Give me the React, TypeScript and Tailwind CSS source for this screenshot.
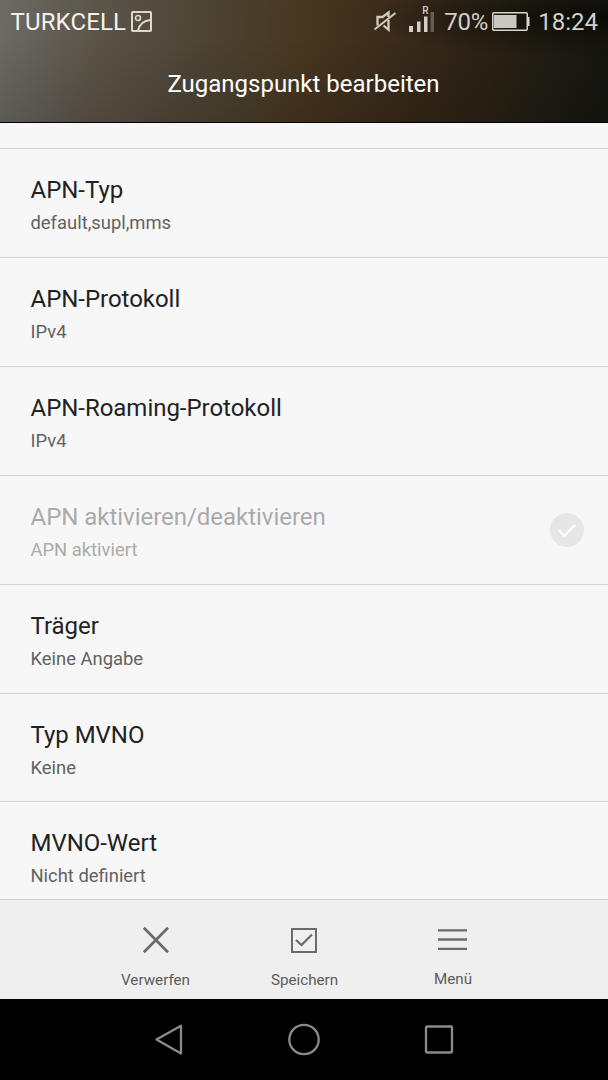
type Setting = { title: string; value: string; disabled?: boolean };

const settings: Setting[] = [
  { title: "APN-Typ", value: "default,supl,mms" },
  { title: "APN-Protokoll", value: "IPv4" },
  { title: "APN-Roaming-Protokoll", value: "IPv4" },
  { title: "APN aktivieren/deaktivieren", value: "APN aktiviert", disabled: true },
  { title: "Träger", value: "Keine Angabe" },
  { title: "Typ MVNO", value: "Keine" },
  { title: "MVNO-Wert", value: "Nicht definiert" },
];

function StatusBar() {
  return (
    <div className="flex h-[43px] items-center pl-[10.500px] pr-[10px] pt-[1px] text-[24px] leading-[43px] text-[#d2cfc9]">
      <span className="w-[115.500px] tracking-[0.150px] text-[#f4f2ee]">TURKCELL</span>
      <svg className="ml-[5px] -mt-[1px] h-[21px] w-[21px] shrink-0" viewBox="0 0 21 21" fill="none" stroke="#dcd9ce" strokeWidth="2">
        <rect x="1" y="1" width="19" height="19" rx="0.8" />
        <circle cx="7" cy="7" r="2.5" strokeWidth="1.7" />
        <path d="M7 19.5C8.5 13.5 13 9.500 19.500 9" />
      </svg>
      <svg className="ml-auto h-[24px] w-[24px] shrink-0" viewBox="0 0 24 24" fill="none" stroke="#d2cbc0" strokeWidth="2.300">
        <path d="M4.500 15.500V7H9.500L15.500 2.500V7M10.500 15.500L15.500 19.800V10" />
        <path d="M1.500 19.500L22.500 3" strokeWidth="2" />
      </svg>
      <div className="relative ml-[12px] h-[43px] w-[26px] shrink-0">
        <svg className="absolute left-0 top-0 h-[43px] w-[26px]" viewBox="0 0 26 43">
          <path d="M0 25h4v6H0zM8 20.500h3.500V31H8zM15 15.500h3.500V31H15z" fill="#d2cfc9" />
          <path d="M21.500 11H25v20h-3.500z" fill="#655d50" />
        </svg>
        <span className="absolute left-[13px] top-[4.500px] text-[10px] leading-[12px] font-medium">R</span>
      </div>
      <span className="ml-[9px] w-[44px] tracking-[-0.200px]">70%</span>
      <svg className="ml-[4px] -mt-[1px] h-[19px] w-[38px] shrink-0" viewBox="0 0 38 19">
        <rect x="0.750" y="0.750" width="34.500" height="17.500" rx="1" fill="none" stroke="#d8d5cf" strokeWidth="1.500" />
        <path d="M2 3h22.500v13H2z" fill="#cbc8c4" />
        <path d="M35.500 5H37.500v9h-2z" fill="#d8d5cf" />
      </svg>
      <span className="ml-[8px]">18:24</span>
    </div>
  );
}

function Header() {
  return (
    <header className="h-[123px] shrink-0 border-b border-black bg-[radial-gradient(ellipse_at_100%_15%,#0a0a05_0%,#0e0c0680_12%,transparent_28%),linear-gradient(to_bottom,transparent_30%,#00000020_100%),linear-gradient(97deg,#6b6b64_0%,#5b5449_16%,#4e4536_32%,#46361f_50%,#38291a_66%,#2a2215_80%,#1a1912_94%,#161611_100%)]">
      <StatusBar />
      <h1 className="h-[80px] pr-[1px] pt-[1px] text-center text-[24px] leading-[80px] text-white">Zugangspunkt bearbeiten</h1>
    </header>
  );
}

function SettingRow({ title, value, disabled }: Setting) {
  return (
    <li className="flex h-[108.830px] shrink-0 items-start justify-between border-t border-[#d3d3d3] pl-[30.500px] pr-[24px]">
      <div className="pt-[26px]">
        <div className={disabled ? "text-[24px] leading-[30px] tracking-[-0.030px] text-[#aaaaaa]" : "text-[24px] leading-[30px] tracking-[-0.030px] text-[#222222]"}>{title}</div>
        <div className={disabled ? "pt-[6px] text-[18.400px] leading-[24px] text-[#ababab]" : "pt-[6px] text-[18.400px] leading-[24px] text-[#626262]"}>{value}</div>
      </div>
      {disabled && (
        <svg className="mt-[37px] h-[34px] w-[34px]" viewBox="0 0 34 34" fill="none">
          <circle cx="17" cy="17" r="17" fill="#e6e6e6" />
          <path d="M9 17.500L14.300 22.800L25 12" stroke="#fbfbfb" strokeWidth="2.500" />
        </svg>
      )}
    </li>
  );
}

function ActionBar() {
  return (
    <footer className="flex h-[100px] shrink-0 border-t border-[#cfcfcf] bg-[#efefef] pl-[81px] pr-[80px] text-center text-[15.200px] leading-[20px] text-[#5c5c5c]">
      <div className="flex w-[149px] flex-col items-center">
        <svg className="mt-[26px] h-[28px] w-[30px]" viewBox="0 0 30 28" fill="none" stroke="#6b6b6b" strokeWidth="2.700">
          <path d="M2.800 1.800L27 26.200M27 1.800L2.800 26.200" />
        </svg>
        <span className="mt-[16px]">Verwerfen</span>
      </div>
      <div className="flex w-[149px] flex-col items-center">
        <svg className="mr-[2px] mt-[26px] h-[28px] w-[28px]" viewBox="0 0 28 28" fill="none" stroke="#6b6b6b" strokeWidth="2">
          <path d="M2 3h24v23H2z" />
          <path d="M6 14l5.500 5L22 8.500" strokeWidth="2.200" />
        </svg>
        <span className="mt-[16px]">Speichern</span>
      </div>
      <div className="flex w-[149px] flex-col items-center">
        <svg className="mr-[2px] mt-[26px] h-[28px] w-[29px]" viewBox="0 0 29 28" stroke="#6b6b6b" strokeWidth="2.300">
          <path d="M0 4.300h29M0 13.500h29M0 22.800h29" />
        </svg>
        <span className="mr-[1px] mt-[14.500px]">Menü</span>
      </div>
    </footer>
  );
}

function NavigationBar() {
  return (
    <nav className="flex h-[81px] shrink-0 items-center justify-between bg-black pl-[154px] pr-[154px]">
      <svg className="h-[32px] w-[30px]" viewBox="0 0 30 32" fill="none" stroke="#8b8b8b" strokeWidth="2.300" strokeLinejoin="round">
        <path d="M2.500 15.500L27 1.800V29.500Z" />
      </svg>
      <svg className="h-[34px] w-[34px]" viewBox="0 0 34 34" fill="none" stroke="#8b8b8b" strokeWidth="2.300">
        <circle cx="17" cy="16.500" r="14.700" />
      </svg>
      <svg className="h-[30px] w-[30px]" viewBox="0 0 30 30" fill="none" stroke="#8b8b8b" strokeWidth="2.300">
        <rect x="2" y="1.500" width="26" height="26" rx="1" />
      </svg>
    </nav>
  );
}

export default function App() {
  return (
    <div className="flex h-[1080px] w-[608px] flex-col overflow-hidden bg-[#f7f7f7] font-['Roboto',sans-serif]">
      <Header />
      <main className="min-h-0 flex-1 overflow-hidden pt-[25.450px]">
        <ul className="flex flex-col">
          {settings.map((setting) => (
            <SettingRow key={setting.title} {...setting} />
          ))}
        </ul>
      </main>
      <ActionBar />
      <NavigationBar />
    </div>
  );
}
